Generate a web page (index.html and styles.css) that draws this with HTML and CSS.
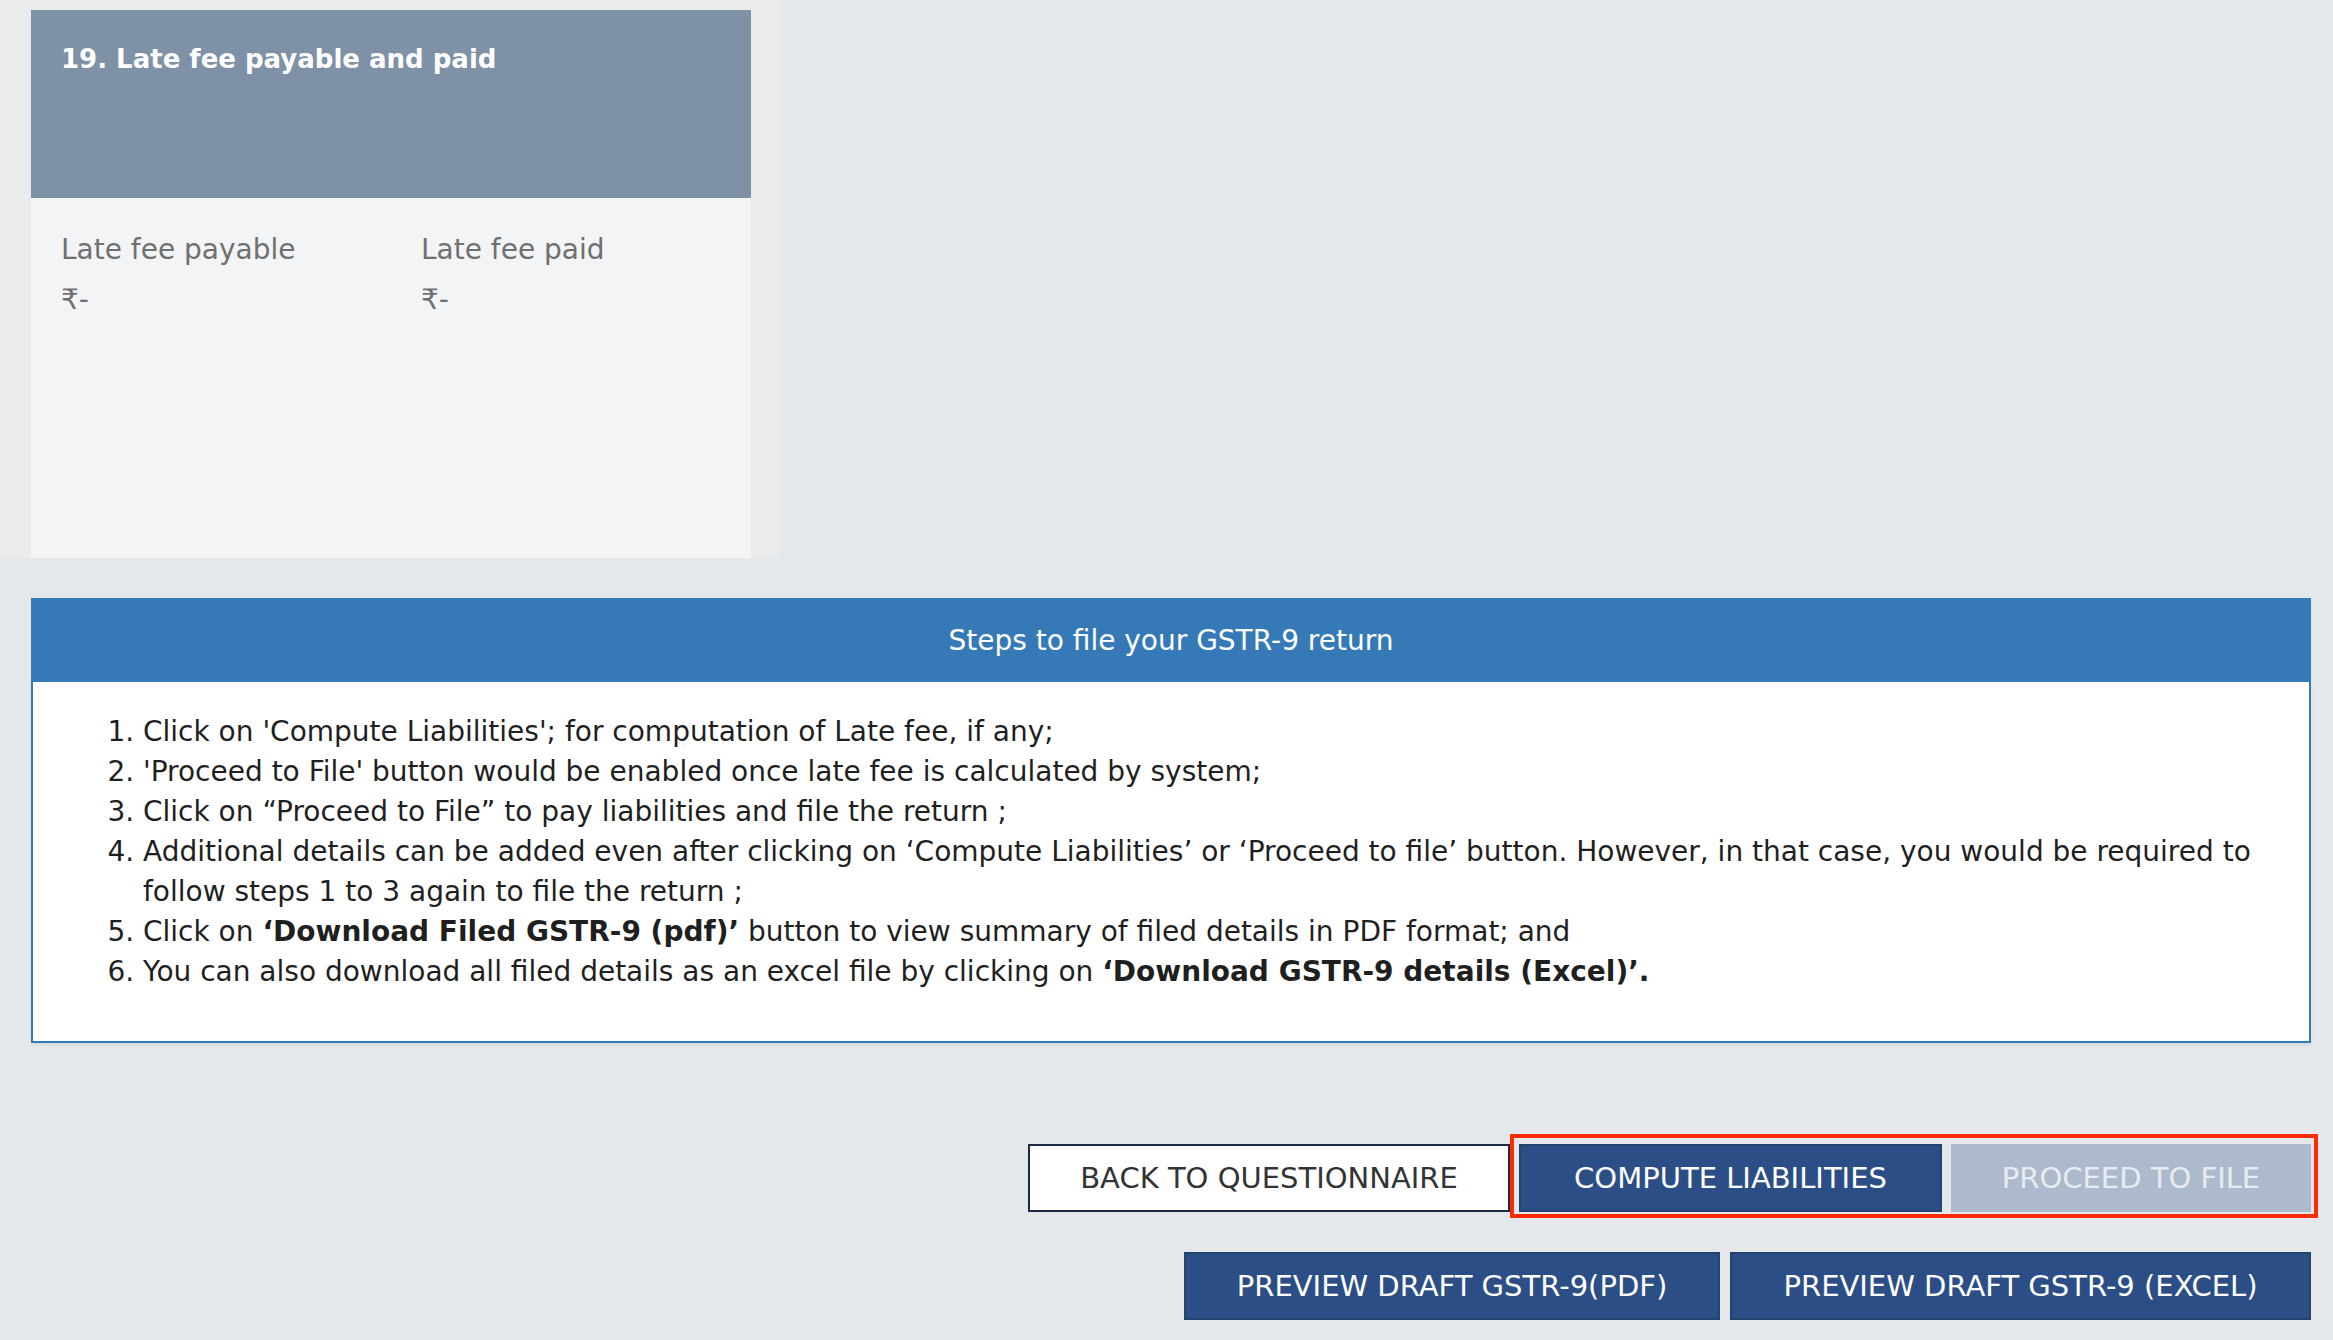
FILE: index.html
```html
<!DOCTYPE html>
<html lang="en">
<head>
    <meta charset="UTF-8">
    <meta name="viewport" content="width=device-width, initial-scale=1.0">
    <title>GSTR-9 Return</title>
    <link rel="stylesheet" href="styles.css">
</head>
<body>
    <div class="tiles">
        <div class="tile">
            <div class="tile-head">19. Late fee payable and paid</div>
            <div class="tile-body">
                <div class="field">
                    <div class="field-label">Late fee payable</div>
                    <div class="field-value">&#8377;-</div>
                </div>
                <div class="field">
                    <div class="field-label">Late fee paid</div>
                    <div class="field-value">&#8377;-</div>
                </div>
            </div>
        </div>
    </div>

    <div class="steps">
        <div class="steps-head">Steps to file your GSTR-9 return</div>
        <div class="steps-body">
            <ol>
                <li>Click on 'Compute Liabilities'; for computation of Late fee, if any;</li>
                <li>'Proceed to File' button would be enabled once late fee is calculated by system;</li>
                <li>Click on &ldquo;Proceed to File&rdquo; to pay liabilities and file the return ;</li>
                <li>Additional details can be added even after clicking on &lsquo;Compute Liabilities&rsquo; or &lsquo;Proceed to file&rsquo; button. However, in that case, you would be required to follow steps 1 to 3 again to file the return ;</li>
                <li>Click on <b>&lsquo;Download Filed GSTR-9 (pdf)&rsquo;</b> button to view summary of filed details in PDF format; and</li>
                <li>You can also download all filed details as an excel file by clicking on <b>&lsquo;Download GSTR-9 details (Excel)&rsquo;.</b></li>
            </ol>
        </div>
    </div>

    <div class="actions">
        <div class="btn-row">
            <button class="btn btn-default">BACK TO QUESTIONNAIRE</button>
            <div class="highlight">
                <button class="btn btn-primary">COMPUTE LIABILITIES</button>
                <button class="btn btn-primary" disabled>PROCEED TO FILE</button>
            </div>
        </div>
        <div class="btn-row second">
            <button class="btn btn-primary btn-wide">PREVIEW DRAFT GSTR-9(PDF)</button>
            <button class="btn btn-primary btn-wide">PREVIEW DRAFT GSTR-9 (EXCEL)</button>
        </div>
    </div>
</body>
</html>
```

FILE: styles.css
```css
body {
    margin: 0;
    background-color: #e4e8eb;
    font-family: "DejaVu Sans", Verdana, sans-serif;
    color: #333333;
}
.tiles {
    width: 720px;
    padding: 10px 29px 0 31px;
    background-color: #e9ebed;
}
.tile {
    height: 548px;
    background-color: #f2f4f6;
}
.tile-head {
    height: 188px;
    box-sizing: border-box;
    padding: 34px 30px;
    background-color: #7f91a7;
    color: #ffffff;
    font-weight: bold;
    font-size: 26px;
}
.tile-body {
    display: flex;
    padding: 35px 30px;
}
.field {
    flex: 0 0 360px;
}
.field-label {
    font-size: 28px;
    color: #707070;
}
.field-value {
    margin-top: 17px;
    font-size: 28px;
    color: #707070;
}
.steps {
    margin: 40px 22px 0 31px;
}
.steps-head {
    height: 84px;
    display: flex;
    align-items: center;
    justify-content: center;
    background-color: #357ab7;
    color: #ffffff;
    font-size: 28px;
}
.steps-body {
    background-color: #ffffff;
    border: 2px solid #357ab7;
    border-top: none;
    padding: 30px 40px 49px 0;
    box-shadow: 0 2px 3px rgba(0, 0, 0, 0.06);
}
.steps-body ol {
    margin: 0;
    padding-left: 110px;
    font-size: 28px;
    line-height: 40px;
    color: #1f1f1f;
}
.actions {
    display: flex;
    flex-direction: column;
    align-items: flex-end;
    margin: 91px 15px 0 0;
}
.btn-row {
    display: flex;
    align-items: flex-start;
}
.btn-row.second {
    gap: 10px;
    margin: 34px 7px 0 0;
}
.highlight {
    display: flex;
    gap: 9px;
    padding: 6px 3px 2px 5px;
    border: 4px solid #ff2a00;
}
.btn {
    height: 68px;
    padding: 0;
    font-family: inherit;
    font-size: 29px;
    border: none;
    cursor: pointer;
}
.btn-default {
    margin-top: 10px;
    background-color: #ffffff;
    color: #333333;
    border: 2px solid #1b2a47;
    width: 482px;
}
.btn-primary {
    background-color: #2c4e86;
    color: #ffffff;
    border: 2px solid #24436f;
    width: 423px;
}
.btn-primary:disabled {
    background-color: #adb9cc;
    color: #e8ebf0;
    border: none;
    width: 360px;
    cursor: default;
}
.btn-wide:first-child {
    width: 536px;
}
.btn-wide:last-child {
    width: 581px;
}
```
